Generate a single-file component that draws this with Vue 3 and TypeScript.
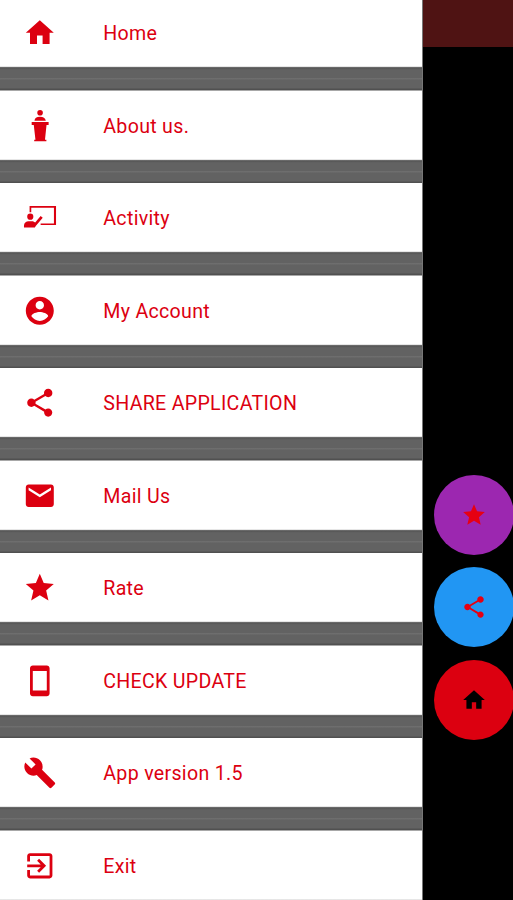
<script setup lang="ts">
interface MenuItem {
  label: string
  icon: string
}

const icons: Record<string, string> = {
  home: 'M10 20v-6h4v6h5v-8h3L12 3 2 12h3v8z',
  podium: 'M12.200 0.700a2 2 0 1 1 0 4a2 2 0 1 1 0-4zM8.200 8.400C8.400 6.400 9.600 5.500 12.100 5.500s3.800.9 4.200 2.900zM6.200 9.300h12.100v2.200h-1.500l-1.100 10.400h1v1.200H8v-1.200h.9L7.700 11.500H6.200z',
  board: 'M4.700 3.600h18.900v13.600H12.600v-1.200h9.500V4.900H5.900v3.200H4.700zM5.200 9a2.200 2.200 0 1 1 0 4.400a2.200 2.200 0 1 1 0-4.400zM.7 19v-1.400c0-2 1.500-3.200 3.300-3.200h3.100l1.600 1 3.900-4.700 1.500 1.200-5 5.900-.6 1.200z',
  account: 'M12 2C6.480 2 2 6.480 2 12s4.480 10 10 10 10-4.480 10-10S17.520 2 12 2zm0 3c1.660 0 3 1.340 3 3s-1.340 3-3 3-3-1.340-3-3 1.340-3 3-3zm0 14.200c-2.500 0-4.710-1.280-6-3.220.03-1.990 4-3.080 6-3.080 1.990 0 5.970 1.090 6 3.080-1.290 1.940-3.500 3.220-6 3.220z',
  share: 'M18 16.080c-.76 0-1.440.3-1.960.77L8.910 12.700c.05-.23.09-.46.09-.7s-.04-.47-.09-.7l7.050-4.110c.54.5 1.250.81 2.040.81 1.660 0 3-1.340 3-3s-1.340-3-3-3-3 1.340-3 3c0 .24.04.47.09.7L8.040 9.810C7.500 9.310 6.790 9 6 9c-1.660 0-3 1.340-3 3s1.340 3 3 3c.79 0 1.500-.31 2.040-.81l7.120 4.160c-.05.21-.08.43-.08.65 0 1.610 1.310 2.920 2.920 2.920s2.920-1.310 2.920-2.920-1.310-2.920-2.920-2.920z',
  mail: 'M20 4H4c-1.100 0-1.990.9-1.990 2L2 18c0 1.100.9 2 2 2h16c1.100 0 2-.9 2-2V6c0-1.100-.9-2-2-2zm0 4l-8 5-8-5V6l8 5 8-5v2z',
  star: 'M12 17.270L18.180 21l-1.640-7.030L22 9.240l-7.190-.61L12 2 9.190 8.630 2 9.240l5.460 4.730L5.820 21z',
  phone: 'M17 1.010L7 1c-1.100 0-2 .9-2 2v18c0 1.100.9 2 2 2h10c1.100 0 2-.9 2-2V3c0-1.100-.9-1.990-2-1.990zM17 19H7V5h10v14z',
  wrench: 'M22.700 19l-9.100-9.100c.9-2.300.4-5-1.500-6.900-2-2-5-2.400-7.400-1.300L9 6 6 9 1.600 4.700C.4 7.100.9 10.100 2.900 12.100c1.900 1.900 4.600 2.400 6.900 1.500l9.100 9.100c.4.4 1 .4 1.400 0l2.300-2.300c.5-.4.5-1.100.1-1.400z',
  exit: 'M10.090 15.590L11.500 17l5-5-5-5-1.410 1.410L12.670 11H3v2h9.670l-2.580 2.590zM19 3H5c-1.110 0-2 .9-2 2v4h2V5h14v14H5v-4H3v4c0 1.100.89 2 2 2h14c1.100 0 2-.9 2-2V5c0-1.100-.9-2-2-2z',
}

const items: MenuItem[] = [
  { label: 'Home', icon: 'home' },
  { label: 'About us.', icon: 'podium' },
  { label: 'Activity', icon: 'board' },
  { label: 'My Account', icon: 'account' },
  { label: 'SHARE APPLICATION', icon: 'share' },
  { label: 'Mail Us', icon: 'mail' },
  { label: 'Rate', icon: 'star' },
  { label: 'CHECK UPDATE', icon: 'phone' },
  { label: 'App version 1.5', icon: 'wrench' },
  { label: 'Exit', icon: 'exit' },
]

const actions = [
  { name: 'star', tone: 'purple' },
  { name: 'share', tone: 'blue' },
  { name: 'home', tone: 'red' },
]
</script>

<template>
  <div class="screen">
    <nav class="drawer">
      <a v-for="item in items" :key="item.label" class="row">
        <svg class="icon" viewBox="0 0 24 24"><path :d="icons[item.icon]" /></svg>
        <span class="label">{{ item.label }}</span>
      </a>
    </nav>
    <aside class="backdrop">
      <div class="appbar"></div>
      <div class="fabs">
        <button v-for="a in actions" :key="a.name" class="fab" :class="a.tone">
          <svg viewBox="0 0 24 24"><path :d="icons[a.name]" /></svg>
        </button>
      </div>
    </aside>
  </div>
</template>

<style>
body {
  margin: 0;
  overflow: hidden;
}
</style>

<style scoped>
.screen {
  display: flex;
  width: 513px;
  height: 900px;
  overflow: hidden;
  background: #000;
}
.drawer {
  box-sizing: border-box;
  flex: none;
  display: flex;
  flex-direction: column;
  width: 423px;
  height: 900px;
  overflow: hidden;
  border-right: 1px solid #777;
  background: #616161;
}
.row {
  box-sizing: border-box;
  flex: none;
  display: flex;
  align-items: center;
  height: 92.5px;
  padding: 1px 0 23.6px 23.3px;
  color: #dc0010;
  background: linear-gradient(
    to bottom,
    #fff 68.3px,
    #b5b5b5 68.9px,
    #505050 69.7px,
    #5e5e5e 71px,
    #626262 72px,
    #626262 79.5px,
    #707070 80.7px,
    #626262 82px,
    #626262 89.5px,
    #505050 91.5px,
    #a8a8a8 92.5px
  );
}
.row:first-child {
  margin-top: -1.9px;
}
.icon {
  flex: none;
  width: 33.6px;
  height: 33.6px;
  fill: currentColor;
}
.label {
  margin: 2.2px 0 0 46.4px;
  font: 400 19.6px/24px Roboto, sans-serif;
  letter-spacing: 0.3px;
  white-space: nowrap;
}
.backdrop {
  display: flex;
  flex-direction: column;
  flex: 1;
  min-width: 0;
}
.appbar {
  height: 46.5px;
  background: #4f1313;
}
.fabs {
  display: flex;
  flex-direction: column;
  gap: 12.3px;
  padding: 428.2px 0 0 10.5px;
}
.fab {
  display: flex;
  flex: none;
  align-items: center;
  justify-content: center;
  width: 80.2px;
  height: 80.2px;
  padding: 0;
  border: 0;
  border-radius: 50%;
  color: #e60012;
}
.fab svg {
  width: 26px;
  height: 26px;
  fill: currentColor;
}
.purple {
  background: #9c27b0;
}
.blue {
  background: #2196f3;
}
.red {
  background: #dc0010;
  color: #000;
}
</style>
